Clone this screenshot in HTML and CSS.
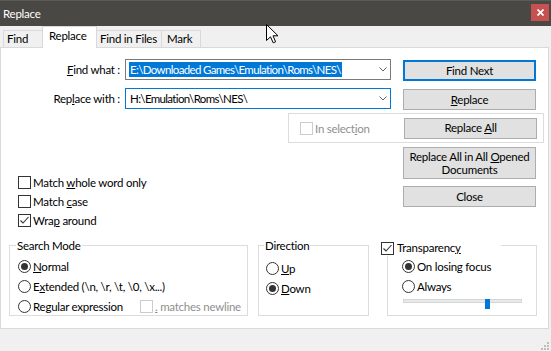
FILE: index.html
```html
<!DOCTYPE html>
<html lang="en">
<head>
  <meta charset="UTF-8" />
  <title>Replace</title>
  <link rel="stylesheet" href="styles.css">
</head>
<body>
  <div class="window">
    <div class="titlebar">
      <span class="title">Replace</span>
      <div class="close">
        <svg width="7" height="7" viewBox="0 0 7 7"><path d="M0.5 0.5 L6.5 6.5 M6.5 0.5 L0.5 6.5" stroke="#fff" stroke-width="1.7"/></svg>
      </div>
    </div>

    <div class="tabs">
      <div class="tab tab-find">Find</div>
      <div class="tab tab-replace active">Replace</div>
      <div class="tab tab-files">Find in Files</div>
      <div class="tab tab-mark">Mark</div>
    </div>

    <div class="panel">
      <div class="row">
        <label class="field-label"><u>F</u>ind what :</label>
        <div class="combo">
          <span class="combo-text selected">E:\Downloaded Games\Emulation\Roms\NES\</span>
          <svg class="chevron" width="8" height="5" viewBox="0 0 8 5"><path d="M0.5 0.5 L4 4 L7.5 0.5" fill="none" stroke="#606060"/></svg>
        </div>
        <button class="btn btn-default">Find Next</button>
      </div>

      <div class="row row-replace">
        <label class="field-label">Rep<u>l</u>ace with :</label>
        <div class="combo focused">
          <span class="combo-text">H:\Emulation\Roms\NES\</span>
          <svg class="chevron" width="8" height="5" viewBox="0 0 8 5"><path d="M0.5 0.5 L4 4 L7.5 0.5" fill="none" stroke="#606060"/></svg>
        </div>
        <button class="btn"><u>R</u>eplace</button>
      </div>

      <div class="selection">
        <span class="check disabled"></span>
        <span class="muted">In select<u>i</u>on</span>
        <button class="btn btn-right">Replace <u>A</u>ll</button>
      </div>

      <div class="middle">
        <div class="options">
          <div class="check-row"><span class="check"></span><span>Match <u>w</u>hole word only</span></div>
          <div class="check-row"><span class="check"></span><span>Match <u>c</u>ase</span></div>
          <div class="check-row"><span class="check checked"><svg width="11" height="11" viewBox="0 0 11 11"><path d="M1.5 5.5 L4 8 L9.5 2" fill="none" stroke="#333" stroke-width="1.1"/></svg></span><span>Wra<u>p</u> around</span></div>
        </div>
        <div class="side">
          <button class="btn btn-tall">Replace All in All <u>O</u>pened<br>Documents</button>
          <button class="btn btn-close">Close</button>
        </div>
      </div>

      <div class="groups">
        <div class="group search-mode">
          <div class="group-title">Search Mode</div>
          <div class="radios">
            <div class="radio-row"><span class="radio on"></span><span><u>N</u>ormal</span></div>
            <div class="radio-row"><span class="radio"></span><span>E<u>x</u>tended (\n, \r, \t, \0, \x...)</span></div>
            <div class="radio-row">
              <span class="radio-wide"><span class="radio"></span><span>Re<u>g</u>ular expression</span></span>
              <span class="check disabled"></span><span class="muted"><u>.</u> matches newline</span>
            </div>
          </div>
        </div>

        <div class="group direction">
          <div class="group-title">Direction</div>
          <div class="radios radios-low">
            <div class="radio-row"><span class="radio"></span><span><u>U</u>p</span></div>
            <div class="radio-row"><span class="radio on"></span><span><u>D</u>own</span></div>
          </div>
        </div>

        <div class="group transparency">
          <div class="group-title trans-title">
            <span class="check checked"><svg width="11" height="11" viewBox="0 0 11 11"><path d="M1.5 5.5 L4 8 L9.5 2" fill="none" stroke="#333" stroke-width="1.1"/></svg></span>
            <span>Transparenc<u>y</u></span>
          </div>
          <div class="radio-row"><span class="radio on"></span><span>On losing focus</span></div>
          <div class="radio-row"><span class="radio"></span><span>Always</span></div>
          <div class="slider">
            <div class="track"></div>
            <div class="thumb"></div>
          </div>
        </div>
      </div>
    </div>

    <div class="footer">
      <svg width="9" height="8" viewBox="0 0 9 8" fill="#bdbdbd">
        <rect x="6" y="0" width="2" height="2"/>
        <rect x="3" y="3" width="2" height="2"/><rect x="6" y="3" width="2" height="2"/>
        <rect x="0" y="6" width="2" height="2"/><rect x="3" y="6" width="2" height="2"/><rect x="6" y="6" width="2" height="2"/>
      </svg>
    </div>

    <svg class="cursor" width="13" height="20" viewBox="0 0 13 20">
      <path d="M0.5 0.5 L0.5 16.5 L4.5 12.8 L7.2 18.8 L9.6 17.8 L7 11.8 L12 11.8 Z" fill="#fff" stroke="#000" stroke-width="1" stroke-linejoin="miter"/>
    </svg>
  </div>
</body>
</html>
```

FILE: styles.css
```css
* {
  box-sizing: border-box;
}
body {
  margin: 0;
  background: #f0f0f0;
  font-family: Lato, "Noto Sans", sans-serif;
  font-size: 11.5px;
  letter-spacing: -0.25px;
  color: #000;
}
u {
  text-underline-offset: 1px;
}
.window {
  position: relative;
  width: 551px;
  height: 351px;
  background: #f0f0f0;
  overflow: hidden;
}

/* title bar */
.titlebar {
  height: 26px;
  background: #4a4845;
  border-top: 1px solid #5c5a57;
  display: flex;
  justify-content: space-between;
  align-items: flex-start;
}
.title {
  color: #fff;
  padding-left: 3px;
  line-height: 25px;
}
.close {
  width: 18px;
  height: 17px;
  margin: 3px 2px 0 0;
  background: #c75050;
  display: flex;
  align-items: center;
  justify-content: center;
}

/* tabs */
.tabs {
  display: flex;
  align-items: flex-end;
  height: 21px;
  padding-left: 3px;
}
.tab {
  height: 17px;
  border: 1px solid #d9d9d9;
  border-bottom: none;
  background: #f0f0f0;
  line-height: 15px;
  padding-left: 3px;
  margin-left: -1px;
  white-space: nowrap;
}
.tab-find { width: 40px; margin-left: 0; }
.tab-replace { width: 55px; padding-left: 6px; }
.tab-files { width: 66px; }
.tab-mark { width: 40px; padding-left: 5px; }
.tab.active {
  height: 22px;
  background: #fff;
  line-height: 18px;
  margin-bottom: -1px;
  position: relative;
  z-index: 1;
}

/* tab page */
.panel {
  width: 549px;
  height: 282px;
  background: #fff;
  border: 1px solid #d9d9d9;
  padding-top: 11px;
}
.row {
  display: flex;
  align-items: flex-start;
  height: 22px;
  margin-bottom: 7px;
}
.row-replace {
  margin-bottom: 3px;
}
.field-label {
  width: 119px;
  margin-right: 5px;
  text-align: right;
  line-height: 21px;
}
.combo {
  width: 266px;
  height: 21px;
  border: 1px solid #7a7a7a;
  background: #fff;
  display: flex;
  align-items: center;
  padding: 0 3px;
}
.combo.focused {
  border-color: #0078d7;
}
.combo-text {
  line-height: 15px;
  padding: 0 1px;
  white-space: nowrap;
  letter-spacing: -0.65px;
}
.combo-text.selected {
  background: #0078d7;
  color: #fff;
}
.chevron {
  margin-left: auto;
  flex: none;
}

.btn {
  width: 133px;
  height: 21px;
  margin-left: 12px;
  margin-top: 1px;
  padding: 0;
  background: #e1e1e1;
  border: 1px solid #adadad;
  font: inherit;
  letter-spacing: inherit;
  color: #000;
  line-height: 14px;
}
.btn-default {
  border: 2px solid #0078d7;
}

.selection {
  margin-left: 287px;
  width: 256px;
  height: 30px;
  border: 1px solid #dcdcdc;
  display: flex;
  align-items: center;
  padding: 0 6px 0 11px;
}
.btn-right {
  margin: 0 0 0 auto;
}
.muted {
  color: #8f8f8f;
}

.check {
  width: 13px;
  height: 13px;
  border: 1px solid #333;
  background: #fff;
  margin-right: 2px;
  flex: none;
  display: flex;
  align-items: center;
  justify-content: center;
}
.check.disabled {
  border-color: #cccccc;
}

.middle {
  display: flex;
  height: 90px;
  margin-bottom: 12px;
}
.options {
  width: 402px;
  padding: 30px 0 0 17px;
}
.check-row {
  display: flex;
  align-items: center;
  height: 19px;
}
.side {
  display: flex;
  flex-direction: column;
  padding-top: 4px;
}
.side .btn {
  margin: 0;
}
.btn-tall {
  height: 32px;
  line-height: 13px;
}
.side .btn-close {
  margin-top: 7px;
}

/* group boxes */
.groups {
  display: flex;
  align-items: flex-start;
}
.group {
  height: 71px;
  border: 1px solid #dcdcdc;
}
.search-mode {
  margin-left: 8px;
  width: 239px;
  padding-left: 8px;
}
.direction {
  margin-left: 10px;
  width: 111px;
  padding-left: 7px;
}
.transparency {
  margin-left: 18px;
  width: 150px;
  padding-left: 14px;
}
.group-title {
  width: max-content;
  margin: -7px 0 0 -2px;
  padding: 0 1px;
  line-height: 14px;
  background: #fff;
}
.trans-title {
  width: 120px;
  height: 16px;
  margin: -6px 0 0 -21px;
  padding: 0;
  display: flex;
  align-items: center;
}
.trans-title .check {
  margin-right: 3px;
}
.radios {
  padding-top: 3px;
}
.radios-low {
  padding-top: 5px;
}
.radio-row {
  display: flex;
  align-items: center;
  height: 20px;
  white-space: nowrap;
}
.radio-wide {
  display: flex;
  align-items: center;
  width: 122px;
}
.radio {
  width: 13px;
  height: 13px;
  border: 1px solid #333;
  border-radius: 50%;
  background: #fff;
  margin-right: 2px;
  flex: none;
  display: flex;
  align-items: center;
  justify-content: center;
}
.radio.on::after {
  content: "";
  width: 7px;
  height: 7px;
  border-radius: 50%;
  background: #333;
}

.slider {
  position: relative;
  width: 119px;
  height: 10px;
  margin: 2px 0 0 1px;
}
.track {
  height: 4px;
  margin-top: 3px;
  background: #e7eaea;
  border: 1px solid #d6d6d6;
}
.thumb {
  position: absolute;
  left: 82px;
  top: 0;
  width: 5px;
  height: 10px;
  background: #0078d7;
}

.footer {
  height: 22px;
  display: flex;
  justify-content: flex-end;
  align-items: flex-end;
  padding: 0 1px 1px 0;
}

.cursor {
  position: absolute;
  left: 266px;
  top: 24px;
}
```
